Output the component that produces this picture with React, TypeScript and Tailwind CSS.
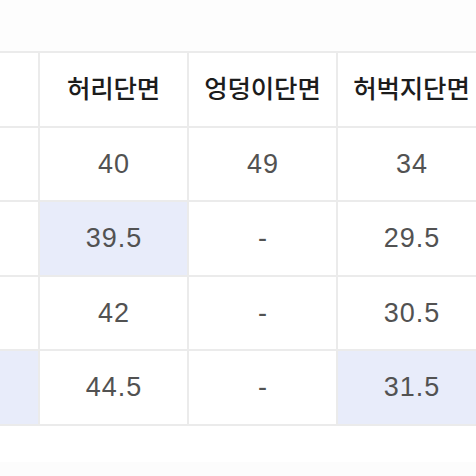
const headers = ["", "허리단면", "엉덩이단면", "허벅지단면"];

const rows: { value: string; hl?: boolean }[][] = [
  [{ value: "" }, { value: "40" }, { value: "49" }, { value: "34" }],
  [{ value: "" }, { value: "39.5", hl: true }, { value: "-" }, { value: "29.5" }],
  [{ value: "" }, { value: "42" }, { value: "-" }, { value: "30.5" }],
  [{ value: "", hl: true }, { value: "44.5" }, { value: "-" }, { value: "31.5", hl: true }],
];

export default function App() {
  return (
    <div
      className="w-[476px] h-[476px] overflow-hidden bg-white"
      style={{ fontFamily: '"Liberation Sans", "Noto Sans CJK KR", sans-serif' }}
    >
      <div className="h-[51px] bg-[#fdfdfd]" />
      <div className="w-[520px] grid grid-cols-[38px_147px_147px_147px] gap-[2px] bg-[#ebebeb] border-y-2 border-[#ebebeb]">
        {headers.map((h, i) => (
          <div
            key={i}
            className="h-[72.5px] bg-white flex items-center justify-center text-[25.5px] font-medium text-[#1c1c1c] tracking-[-0.2px]"
          >
            {h}
          </div>
        ))}
        {rows.map((row, r) =>
          row.map((cell, c) => (
            <div
              key={`${r}-${c}`}
              className={`h-[72.5px] flex items-center justify-center text-[27px] tracking-[1px] pl-[1px] text-[#525252] ${
                cell.hl ? "bg-[#e8ecfa]" : "bg-white"
              }`}
            >
              {cell.value}
            </div>
          ))
        )}
      </div>
      <div className="h-[36px] bg-white" />
      <div className="h-[20px] bg-[#fcfcfc]" />
    </div>
  );
}
